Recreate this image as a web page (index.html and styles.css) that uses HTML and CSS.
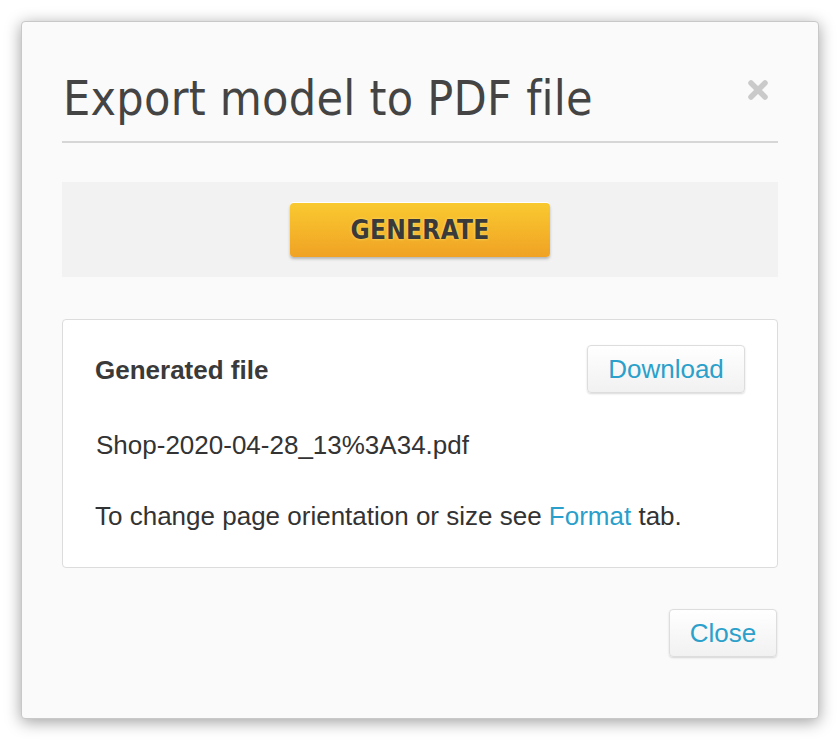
FILE: index.html
```html
<!DOCTYPE html>
<html>
<head>
<meta charset="utf-8">
<link rel="stylesheet" href="styles.css">
</head>
<body>
<div class="dialog">
  <div class="header">
    <h1 class="title">Export model to PDF file</h1>
    <span class="close-x">
      <svg width="24" height="24" viewBox="0 0 24 24"><path d="M5 5 L19 19 M19 5 L5 19" stroke="#cacaca" stroke-width="5.5" stroke-linecap="round"/></svg>
    </span>
  </div>
  <div class="gen-area">
    <button class="btn-generate">GENERATE</button>
  </div>
  <div class="card">
    <div class="card-head">
      <span class="card-title">Generated file</span>
      <button class="btn btn-download">Download</button>
    </div>
    <div class="filename">Shop-2020-04-28_13%3A34.pdf</div>
    <div class="hint">To change page orientation or size see <a class="link">Format</a> tab.</div>
  </div>
  <div class="footer">
    <button class="btn btn-close">Close</button>
  </div>
</div>
</body>
</html>
```
FILE: styles.css
```css
html, body {
  margin: 0;
  padding: 0;
  background: #ffffff;
}
body {
  padding: 21px;
  font-family: "Liberation Sans", Arial, sans-serif;
}
.dialog {
  width: 716px;
  height: 696px;
  padding: 0 40px;
  background: #fafafa;
  border: 1px solid #c8c8c8;
  border-radius: 4px;
  box-shadow: 0 3px 16px rgba(0,0,0,0.38);
  box-sizing: content-box;
}
.header {
  display: flex;
  justify-content: space-between;
  align-items: flex-start;
  padding-top: 48px;
  padding-bottom: 15px;
  border-bottom: 2px solid #d6d6d6;
}
.title {
  margin: 0 0 0 1px;
  font-family: "DejaVu Sans", sans-serif;
  font-stretch: condensed;
  font-weight: normal;
  font-size: 48px;
  letter-spacing: 0.25px;
  line-height: 56px;
  color: #444444;
}
.close-x {
  margin-top: 8px;
  margin-right: 8px;
  display: flex;
}
.gen-area {
  margin-top: 39px;
  background: #f2f2f2;
  height: 95px;
  display: flex;
  justify-content: center;
  align-items: center;
}
.btn-generate {
  width: 260px;
  height: 54px;
  margin-top: 1px;
  border: none;
  border-radius: 4px;
  background: linear-gradient(#f9c930, #f0a224);
  box-shadow: 0 -1px 0 #ffffff, 0 2px 3px rgba(0,0,0,0.25);
  font-family: "DejaVu Sans", sans-serif;
  font-stretch: condensed;
  font-weight: bold;
  font-size: 26px;
  letter-spacing: 0.3px;
  color: #3a3a3a;
  text-shadow: 0 0 3px #ffe070;
  padding: 0;
}
.card {
  margin-top: 42px;
  background: #ffffff;
  border: 1px solid #dcdcdc;
  border-radius: 4px;
  padding: 25px 32px 0 32px;
  box-sizing: content-box;
  height: 222px;
}
.card-head {
  display: flex;
  justify-content: space-between;
  align-items: center;
}
.card-title {
  padding-top: 3px;
  font-weight: bold;
  font-size: 26px;
  color: #3a3a3a;
}
.btn {
  height: 48px;
  padding: 0 20px;
  border: 1px solid #dddddd;
  border-radius: 4px;
  background: linear-gradient(#ffffff, #f1f1f1);
  box-shadow: 0 1px 2px rgba(0,0,0,0.15);
  font-family: "Liberation Sans", Arial, sans-serif;
  font-size: 26px;
  color: #2aa0cb;
}
.btn-download {
  width: 158px;
  padding: 0;
}
.filename {
  margin-top: 37px;
  margin-left: 1px;
  font-size: 26px;
  color: #333333;
}
.hint {
  margin-top: 40px;
  font-size: 26px;
  color: #333333;
}
.link {
  color: #2a9fcb;
}
.footer {
  margin-top: 41px;
  display: flex;
  justify-content: flex-end;
}
.btn-close {
  width: 108px;
  padding: 0;
  margin-right: 1px;
}
```
